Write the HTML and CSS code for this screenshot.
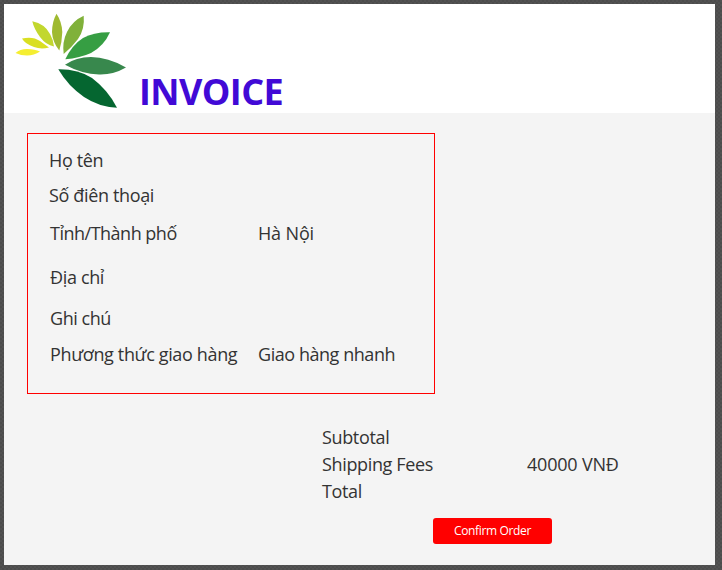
FILE: index.html
```html
<!DOCTYPE html>
<html lang="vi">
<head>
<meta charset="utf-8">
<title>Invoice</title>
<link rel="stylesheet" href="styles.css">
</head>
<body>
<main class="window">
  <header class="header">
    <svg class="logo" width="112" height="96" viewBox="15 13 112 96" aria-hidden="true">
      <path fill="#f5ee31" d="M15.5 53 Q20 49 27 49 Q35 49 40 51.5 Q34 55.5 27 55.5 Q21 55.5 15.5 53Z"/>
      <path fill="#d9df22" d="M22 38.5 Q33 36 40 41 Q44 44 49 47.5 Q41 49.5 34 47 Q25 44 22 38.5Z"/>
      <path fill="#c2d72e" d="M32.300 21.300 Q45 24 50 34 Q53 39 54 46.500 Q46 45 40 37 Q34 29 32.300 21.300Z"/>
      <path fill="#9fba30" d="M56.500 13.700 Q62 22 62.300 32 Q62 42 59.300 50.500 Q52.500 42 52 32 Q52 22 56.500 13.700Z"/>
      <path fill="#80b13a" d="M83.700 15.700 Q85 29 78 39 Q72 47 63.700 54 Q62 42 67 32 Q72 21 83.700 15.700Z"/>
      <path fill="#369e43" d="M110 32.300 Q104 46 91 53 Q80 58 65.300 59.300 Q72 45 83 38 Q94 32 110 32.300Z"/>
      <path fill="#38884d" d="M65 64.700 Q76 57 91 57 Q108 57 126 67.500 Q113 75 99 74.500 Q82 74 65 64.700Z"/>
      <path fill="#056630" d="M58.300 69.300 Q78 69 92 78 Q108 90 117 107.700 Q99 107 84 97 Q68 86 58.300 69.300Z"/>
    </svg>
    <h1 class="title">INVOICE</h1>
  </header>
  <section class="details">
    <span class="name">Họ tên</span><span></span>
    <span class="phone">Số điên thoại</span><span></span>
    <span class="label city">Tỉnh/Thành phố</span><span class="value city-value">Hà Nội</span>
    <span class="label address">Địa chỉ</span><span></span>
    <span class="label note">Ghi chú</span><span></span>
    <span class="label method">Phương thức giao hàng</span><span class="value method-value">Giao hàng nhanh</span>
  </section>
  <section class="totals">
    <span class="subtotal">Subtotal</span><span></span>
    <span class="shipping">Shipping Fees</span><span class="amount">40000 VNĐ</span>
    <span class="total">Total</span><span></span>
  </section>
  <button class="confirm" type="button">Confirm Order</button>
</main>
</body>
</html>
```
FILE: styles.css
```css
* { box-sizing: border-box; }
body {
  margin: 0;
  width: 722px;
  height: 570px;
  padding: 4px;
  overflow: hidden;
  background: repeating-conic-gradient(#4c4c4c 0 25%, #525252 0 50%) 0 0 / 4px 4px;
  font-family: "Open Sans", "Noto Sans", sans-serif;
  color: #333;
}
.window {
  width: 711px;
  height: 561px;
  background: #f4f4f4;
}
.header {
  display: flex;
  height: 109px;
  padding: 9px 0 0 11px;
  background: #fff;
}
.logo { flex: none; }
.title {
  margin: 55px 0 0 12px;
  font-size: 36px;
  line-height: 48px;
  font-weight: 700;
  color: #4109d6;
  letter-spacing: -0.6px;
}
.details {
  display: grid;
  grid-template-columns: 208px 1fr;
  grid-template-rows: 35px 38px 44px 41px 36px 24px;
  width: 408px;
  height: 261px;
  margin: 20px 0 0 23px;
  padding: 14px 0 0 21px;
  border: 1px solid #f00;
  font-size: 18px;
  line-height: 24px;
  letter-spacing: -0.35px;
  white-space: nowrap;
}
.label, .value { padding-left: 1px; }
.city { letter-spacing: -0.5px; }
.city-value { letter-spacing: -0.15px; }
.note, .method-value { letter-spacing: -0.45px; }
.totals {
  display: grid;
  grid-template-columns: 205px 1fr;
  grid-auto-rows: 27px;
  margin: 30px 0 0 318px;
  font-size: 18px;
  line-height: 27px;
  letter-spacing: -0.35px;
  white-space: nowrap;
}
.amount { letter-spacing: -0.2px; }
.confirm {
  display: block;
  width: 119px;
  height: 26px;
  margin: 13px 0 0 429px;
  padding: 0;
  border: 0;
  border-radius: 3px;
  background: #f00;
  color: #fff;
  font: 12px/26px "Open Sans", "Noto Sans", sans-serif;
  letter-spacing: -0.35px;
}
```
